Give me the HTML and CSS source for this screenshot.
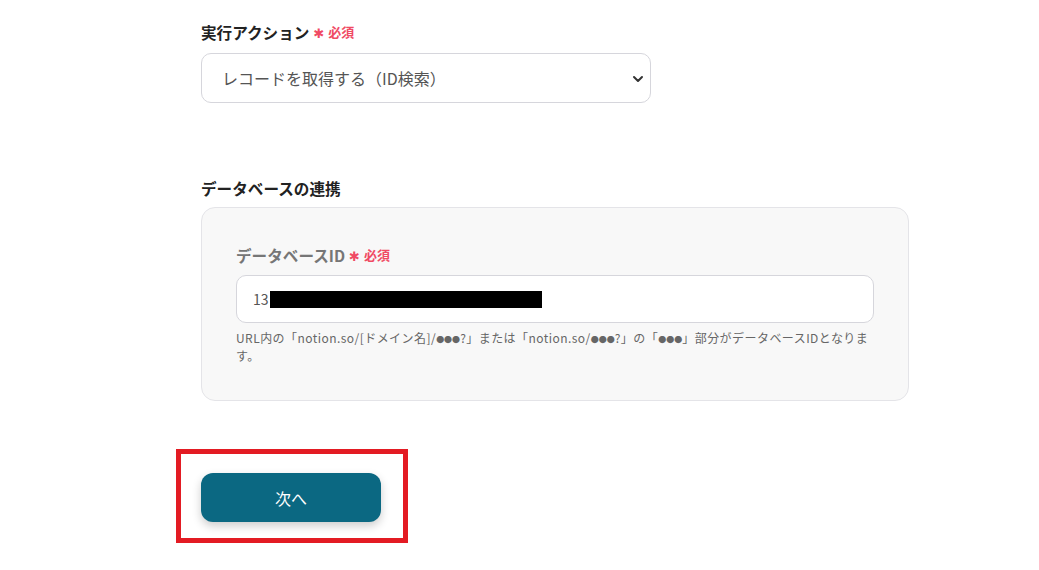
FILE: index.html
```html
<!DOCTYPE html>
<html lang="ja">
<head>
    <meta charset="UTF-8">
    <meta name="viewport" content="width=device-width, initial-scale=1.0">
    <title>設定</title>
    <link rel="stylesheet" href="styles.css">
</head>
<body>
    <div class="page">
        <div class="field-label">実行アクション<span class="req"><span class="star">✱</span>必須</span></div>
        <div class="select-box">
            <span>レコードを取得する（ID検索）</span>
            <svg class="chevron" width="12" height="8" viewBox="0 0 12 8">
                <path d="M2 2 L6 6 L10 2" fill="none" stroke="#333" stroke-width="2" stroke-linecap="round" stroke-linejoin="round"/>
            </svg>
        </div>

        <div class="field-label section">データベースの連携</div>
        <div class="panel">
            <div class="field-label sub">データベースID<span class="req"><span class="star">✱</span>必須</span></div>
            <div class="text-input">13<span class="redact"></span></div>
            <p class="help">URL内の「notion.so/[ドメイン名]/<span class="dots">●●●</span>?」または「notion.so/<span class="dots">●●●</span>?」の「<span class="dots">●●●</span>」部分がデータベースIDとなります。</p>
        </div>

        <div class="highlight">
            <button class="next-btn">次へ</button>
        </div>
    </div>
</body>
</html>
```

FILE: styles.css
```css
body {
    margin: 0;
    font-family: "Noto Sans CJK JP", "Noto Sans", sans-serif;
    background: #fff;
    color: #222;
}
.page {
    padding: 21px 0 0 201px;
}
.field-label {
    font-size: 15.6px;
    font-weight: bold;
    line-height: 22px;
    color: #222;
    margin-bottom: 10px;
    display: flex;
    align-items: center;
}
.field-label.section {
    margin-top: 74px;
    margin-bottom: 8px;
}
.field-label.sub {
    color: #767676;
    margin-bottom: 9px;
}
.req {
    display: inline-flex;
    align-items: center;
    color: #f04a64;
    font-size: 13px;
    font-weight: bold;
    margin-left: 4px;
}
.star {
    font-family: "DejaVu Sans", sans-serif;
    font-size: 13px;
    font-weight: normal;
    line-height: 22px;
    margin-right: 4px;
    position: relative;
    top: 2px;
}
.select-box {
    position: relative;
    height: 48px;
    width: 428px;
    border: 1px solid #d6d6dc;
    border-radius: 10px;
    display: flex;
    align-items: center;
    padding-left: 20px;
    font-size: 16px;
    color: #555;
}
.chevron {
    position: absolute;
    right: 6px;
    top: 21px;
}
.panel {
    width: 638px;
    background: #f8f8f8;
    border: 1px solid #e4e4e8;
    border-radius: 14px;
    padding: 36px 34px 35px 34px;
}
.text-input {
    height: 46px;
    background: #fff;
    border: 1px solid #d6d6dc;
    border-radius: 10px;
    display: flex;
    align-items: center;
    padding-left: 16px;
    font-size: 14px;
    color: #555;
}
.redact {
    display: inline-block;
    width: 272px;
    height: 17px;
    background: #000;
    margin-left: 1px;
}
.help {
    margin: 6px 0 0;
    font-size: 12px;
    line-height: 18px;
    color: #666;
    letter-spacing: 0.45px;
}
.dots {
    font-size: 8px;
    line-height: 1;
    letter-spacing: 0;
}
.highlight {
    display: inline-block;
    margin: 48px 0 0 -25px;
    border: 5px solid #e31b23;
    padding: 19px 22px 16px 20px;
}
.next-btn {
    display: block;
    width: 180px;
    height: 49px;
    background: #0b6882;
    color: #fff;
    border: none;
    border-radius: 12px;
    font-family: inherit;
    font-size: 16px;
    box-shadow: 0 4px 10px rgba(0, 0, 0, 0.2);
    cursor: pointer;
}
```
